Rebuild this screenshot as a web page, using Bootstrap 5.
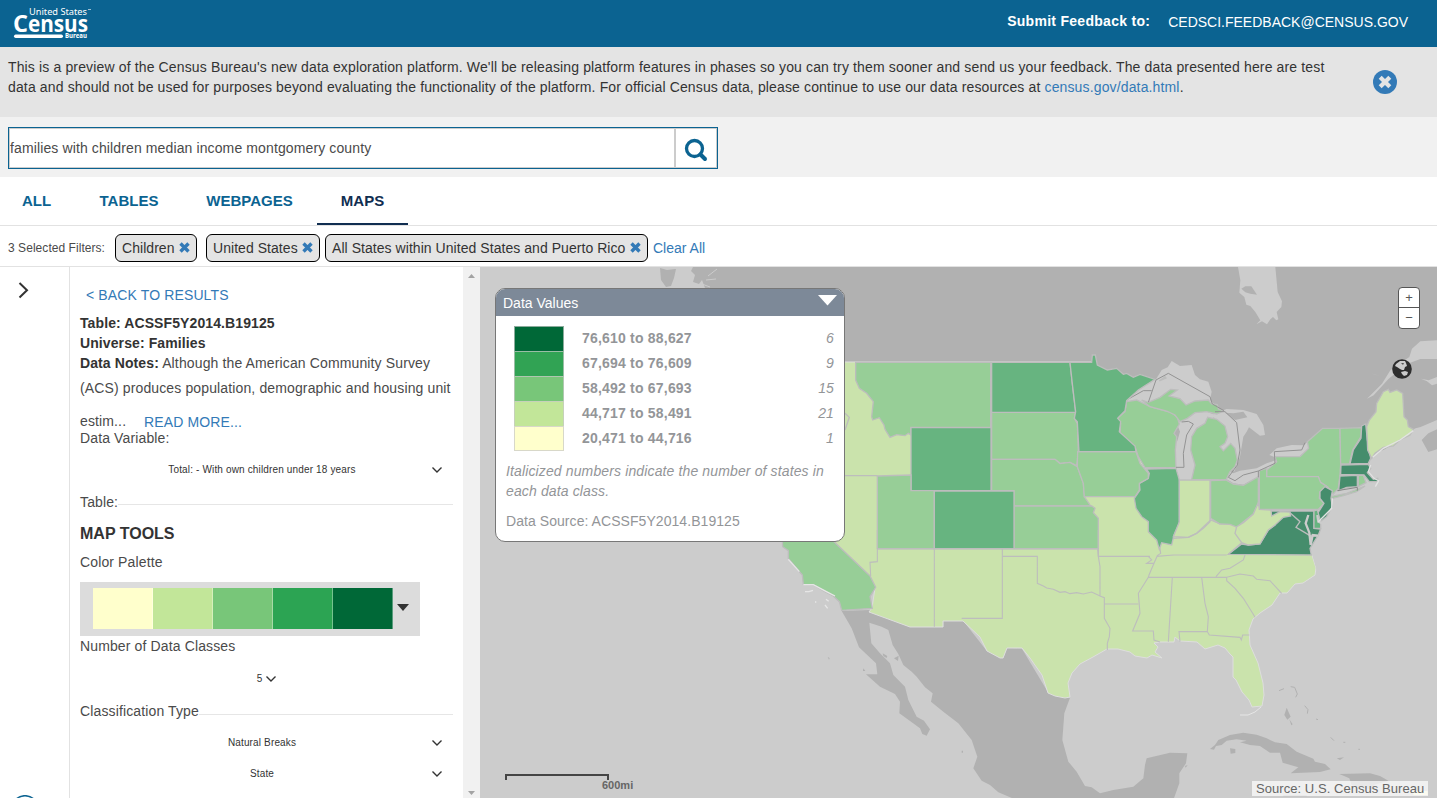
<!DOCTYPE html>
<html lang="en">
<head>
<meta charset="utf-8">
<meta name="viewport" content="width=device-width, initial-scale=1">
<title>Census data explorer - Maps</title>
<link href="https://cdn.jsdelivr.net/npm/bootstrap@5.3.0/dist/css/bootstrap.min.css" rel="stylesheet">
<style>
body{font-family:"Liberation Sans",Arial,sans-serif;font-size:14px;line-height:20px;color:#4a4a4a;height:798px;overflow:hidden;background:#fff}
a{color:#337ab7;text-decoration:none}
.topbar{height:47px;background:#0b6391;color:#fff;padding-right:29px}
.topbar a{color:#fff;margin-left:18px;padding-top:1px}
.topbar b{letter-spacing:.28px}
.logo{margin-left:13px;margin-top:6px;overflow:visible}
.notice{height:70px;background:#e4e4e4;color:#333;padding:10px 40px 0 8px}
.notice p{letter-spacing:.142px;white-space:nowrap}
.notice svg{margin-top:13px}
.searchbar{height:60px;background:#f1f1f1;padding:10px 8px}
.searchbox{width:710px;height:42px;border:1px solid #0b6391;background:#fff}
.searchbox .inner{border:1px solid #ccc;width:100%}
.searchbox input{border:0;outline:0;padding:0;color:#4a4a4a;letter-spacing:.12px;height:38px;background:transparent}
.searchbox button{width:42px;border:0;border-left:2px solid #ccc;background:#fff;padding:4px 0 0}
.tabs{height:49px;border-bottom:1px solid #e2e2e2}
.tabs a{color:#0b6391;font-weight:700;font-size:15px;height:48px;line-height:47px;text-align:center}
.tabs a.active{color:#112e51;border-bottom:2px solid #112e51}
.filters{height:41px;border-bottom:1px solid #e2e2e2;padding:3px 8px 0}
.filters .cap{font-size:12px;letter-spacing:.05px;width:107px}
.chip{height:28px;border:1px solid #000;border-radius:6px;background:#e4e4e4;color:#333;padding:0 6px;letter-spacing:.05px;white-space:nowrap}
.stage{height:531px}
.rail{width:70px;border-right:1px solid #e2e2e2}
.side{width:393px;padding:18px 10px 0;overflow:hidden}
.ln{height:20px;white-space:nowrap;letter-spacing:.13px}
.ln b{color:#333;letter-spacing:.1px}
.rule{height:1px;background:#e6e6e6;flex:1}
.pick{height:30px;font-size:10px;letter-spacing:.15px;color:#333}
.pick span{width:364px;text-align:center}
.pal{width:340px;height:54px;background:#dcdcdc;padding:0 11px 2px 13px}
.pal .sw{width:60px;height:41px;border-right:1px solid rgba(255,255,255,.35)}
.sbar{width:17px;background:#f1f1f1;padding:7px 0 3px}
.mapwrap{position:relative;width:957px;background:#ccc;overflow:hidden}
.legend{position:absolute;left:15px;top:21px;width:350px;height:254px;border:1px solid #777;border-radius:10px;background:#fff;color:#939598;overflow:hidden}
.legend .head{height:27px;background:#7d8998;color:#fff;padding:1px 7px 0 7px}
.legend .cls{height:25px;padding:0 10px 0 18px}
.legend .cls i{letter-spacing:.1px;padding-bottom:2px}
.legend .cls b{letter-spacing:.2px;margin-left:18px;padding-bottom:2px}
.legend .box{width:50px;height:25px;border:1px solid rgba(200,200,200,.7);border-bottom-width:0}
.legend .cls:last-child .box{border-bottom-width:1px}
.legend p{padding:0 10px;letter-spacing:.13px}
.zoomer{position:absolute;left:918px;top:20px;width:22px;height:42px;border:1px solid #555;border-radius:4px;background:#fff;color:#555;font-size:13px}
.zoomer div{height:20px;line-height:20px;text-align:center}
.scale{position:absolute;left:25px;top:507px;width:104px;height:6px;border:2px solid #444;border-bottom:0}
.scaletxt{position:absolute;left:122px;top:508px;font-size:11px;font-weight:700;color:#666}
.globe{position:absolute;left:912px;top:92px}
.src{position:absolute;left:772px;top:514px;width:176px;height:15px;line-height:15px;background:rgba(255,255,255,.7);color:#666;padding-left:4px;font-size:13px;letter-spacing:.05px;white-space:nowrap}
.st path,.bd path{vector-effect:non-scaling-stroke}
.c1{fill:#cae3ac}.c2{fill:#97ce97}.c3{fill:#67b480}.c4{fill:#458d6c}
.st{stroke:#bdbdbd;stroke-width:1.3}
.bd{fill:none;stroke:#bdbdbd;stroke-width:1.1}
.intl{fill:none;stroke:#939393;stroke-width:3}
</style>
</head>
<body>
<header class="topbar d-flex align-items-start justify-content-between">
  <svg class="logo" width="80" height="35" viewBox="0 0 80 35" fill="#fff" font-family="Open Sans, sans-serif">
    <text x="16" y="9" font-size="8.500" font-family="Noto Sans" textLength="58" lengthAdjust="spacingAndGlyphs">United States</text>
    <text x="0" y="25.500" font-size="24" font-weight="700" textLength="15" lengthAdjust="spacingAndGlyphs">C</text>
    <text x="15" y="25.500" font-size="22.500" font-weight="700" textLength="60" lengthAdjust="spacingAndGlyphs">ensus</text>
    <rect x="1" y="28.5" width="49" height="3.5" rx="1.7"/>
    <text x="52" y="32" font-size="6.5" font-weight="700" textLength="22" lengthAdjust="spacingAndGlyphs">Bureau</text>
    <path d="M75 3h3v1h-3z" opacity=".6"/>
  </svg>
  <div class="d-flex" style="padding-top:11px"><b>Submit Feedback to:</b><a href="#">CEDSCI.FEEDBACK@CENSUS.GOV</a></div>
</header>
<section class="notice d-flex justify-content-between">
  <p class="m-0">This is a preview of the Census Bureau's new data exploration platform. We'll be releasing platform features in phases so you can try them sooner and send us your feedback. The data presented here are test<br>data and should not be used for purposes beyond evaluating the functionality of the platform. For official Census data, please continue to use our data resources at <a href="#">census.gov/data.html</a>.</p>
  <svg width="24" height="24" viewBox="0 0 24 24"><circle cx="12" cy="12" r="12" fill="#337ab7"/><path d="M7.2 7.2l9.6 9.6M16.8 7.2l-9.6 9.6" stroke="#e4e4e4" stroke-width="4.2"/></svg>
</section>
<section class="searchbar">
  <div class="searchbox d-flex"><div class="inner d-flex">
    <input class="flex-grow-1" type="text" aria-label="Search" value="families with children median income montgomery county">
    <button aria-label="Go"><svg width="24" height="24" viewBox="0 0 24 24" fill="none" stroke="#0b6391"><circle cx="10.5" cy="10.5" r="8" stroke-width="3.3"/><path d="M16.5 16.5l4.500 4.500" stroke-width="4" stroke-linecap="round"/></svg></button>
  </div></div>
</section>
<nav class="tabs d-flex">
  <a href="#" style="width:73px">ALL</a><a href="#" style="width:112px">TABLES</a><a href="#" style="width:129px">WEBPAGES</a><a href="#" class="active" style="width:91px;margin-left:3px">MAPS</a>
</nav>
<section class="filters d-flex align-items-center">
  <span class="cap">3 Selected Filters:</span>
  <span class="chip d-flex align-items-center justify-content-between" style="width:82px;margin-right:9px">Children <svg width="11" height="11" viewBox="0 0 11 11"><path d="M1.5 1.5l8 8M9.5 1.5l-8 8" stroke="#337ab7" stroke-width="3.4"/></svg></span>
  <span class="chip d-flex align-items-center justify-content-between" style="width:114px;margin-right:5px">United States <svg width="11" height="11" viewBox="0 0 11 11"><path d="M1.5 1.5l8 8M9.5 1.5l-8 8" stroke="#337ab7" stroke-width="3.4"/></svg></span>
  <span class="chip d-flex align-items-center justify-content-between" style="width:323px;margin-right:5px">All States within United States and Puerto Rico <svg width="11" height="11" viewBox="0 0 11 11"><path d="M1.5 1.5l8 8M9.5 1.5l-8 8" stroke="#337ab7" stroke-width="3.4"/></svg></span>
  <a href="#">Clear All</a>
</section>
<main class="stage d-flex">
  <div class="rail d-flex flex-column justify-content-between overflow-hidden">
    <svg width="40" height="40" viewBox="0 0 40 40" fill="none" stroke="#333" stroke-width="2"><path d="M19.5 16l7.5 7.2-7.5 7.3"/></svg>
    <svg width="50" height="3" viewBox="0 0 50 3" fill="none" stroke="#0b6391" stroke-width="1.5"><circle cx="25" cy="14" r="13.3"/></svg>
  </div>
  <div class="side">
    <div class="ln ps-1"><a href="#" style="padding-left:2px">&lt; BACK TO RESULTS</a></div>
    <div class="ln mt-2"><b>Table: ACSSF5Y2014.B19125</b></div>
    <div class="ln"><b>Universe: Families</b></div>
    <div class="ln"><b>Data Notes:</b> Although the American Community Survey</div>
    <div class="ln" style="margin-top:5px">(ACS) produces population, demographic and housing unit</div>
    <div class="ln d-flex" style="margin-top:15px;height:15px;line-height:17px"><span style="width:64px">estim...</span><a href="#" class="pt-0" style="line-height:19px">READ MORE...</a></div>
    <div class="ln" style="height:18px;line-height:20px">Data Variable:</div>
    <div class="pick d-flex align-items-center" style="margin-top:9px"><span style="margin-right:-13px">Total: - With own children under 18 years</span><svg width="12" height="8" viewBox="0 0 12 8" fill="none" stroke="#333" stroke-width="1.4"><path d="M1.5 1.5L6 6l4.500-4.500"/></svg></div>
    <div class="ln d-flex align-items-center" style="margin-top:7px">Table:<div class="rule mt-1"></div></div>
    <div class="ln" style="margin-top:12px;font-size:16px"><b style="letter-spacing:0">MAP TOOLS</b></div>
    <div class="ln" style="margin-top:8px">Color Palette</div>
    <div class="pal d-flex align-items-center" style="margin-top:10px">
      <div class="sw" style="background:#ffffcc"></div><div class="sw" style="background:#c2e699"></div><div class="sw" style="background:#78c679"></div><div class="sw" style="background:#2ca453"></div><div class="sw" style="background:#006837"></div>
      <svg class="ms-1" width="12" height="7" viewBox="0 0 12 7" style="margin-top:-2px"><path d="M0 0h12L6 7z" fill="#333"/></svg>
    </div>
    <div class="ln">Number of Data Classes</div>
    <div class="pick d-flex align-items-center justify-content-center" style="margin-top:8px;margin-bottom:-1px;padding-left:1px">5<svg style="margin-left:3px" width="12" height="8" viewBox="0 0 12 8" fill="none" stroke="#333" stroke-width="1.400"><path d="M1.5 1.500L6 6l4.500-4.500"/></svg></div>
    <div class="ln d-flex align-items-center" style="margin-top:8px">Classification Type<div class="rule" style="margin-top:6px"></div></div>
    <div class="pick d-flex align-items-center" style="margin-top:7px"><span style="margin-right:-13px">Natural Breaks</span><svg width="12" height="8" viewBox="0 0 12 8" fill="none" stroke="#333" stroke-width="1.4"><path d="M1.5 1.5L6 6l4.500-4.500"/></svg></div>
    <div class="pick d-flex align-items-center" style="margin-top:1px"><span style="margin-right:-13px">State</span><svg width="12" height="8" viewBox="0 0 12 8" fill="none" stroke="#333" stroke-width="1.4"><path d="M1.5 1.5L6 6l4.500-4.500"/></svg></div>
  </div>
  <div class="sbar d-flex flex-column justify-content-between align-items-center">
    <svg width="7" height="4" viewBox="0 0 7 4"><path d="M0 4h7L3.500 0z" fill="#a3a3a3"/></svg>
    <svg width="7" height="4" viewBox="0 0 7 4"><path d="M0 0h7L3.500 4z" fill="#a3a3a3"/></svg>
  </div>
  <div class="mapwrap">
    <svg class="d-block" width="957" height="531" viewBox="480 267 957 531">
      <g fill="#b1b1b1">
        <!-- Canada and the islands off British Columbia -->
        <path d="M693 267L691 271L695 275L693 282L699 284L702 280L705 288L845 364H1095L1240 500L1330 470L1410 440L1437 418V267Z"/>
        <path d="M660 268l7 2 8-1 1 0-2 9-3 8-5 1-5-7z"/>
        <path d="M708 276l9-7M706 280l10-1M702 284l8 3" stroke="#ccc" stroke-width="1" fill="none"/>
      </g>
      <g transform="translate(1037 262) scale(.33333)">
        <path fill="#ccc" d="M603 15L715 15L722 90L735 118L733 135L719 150L724 172L718 175L708 165L700 172L690 187L675 178L658 187L670 175L655 150L640 132L628 128L622 105L607 92L610 55Z"/>
        <path fill="#b1b1b1" d="M613 80L625 73L643 73L660 98L640 95L625 91Z"/>
        <path fill="#ccc" d="M1200 235L1150 238L1125 260L1117 285L1095 300L1060 325L1035 365L990 410L1010 400L1055 350L1110 306L1150 291L1200 291Z"/>
        <path fill="#ccc" d="M1152 350L1175 355L1200 345V365L1185 370L1170 358ZM1000 333L1028 342L1015 338Z"/>
      </g>
      <g fill="#b1b1b1" transform="translate(770 530) scale(.33333)">
        <!-- Mexico with Baja California and Yucatan -->
        <path d="M215 243L298 240L420 291L520 291L520 273L580 273L650 362L700 385L710 353L755 355L835 488L900 503L883 550L877 630L895 695L920 725L945 768L965 772L990 790L1030 780L1090 770L1120 745L1125 705L1130 685L1200 668L1252 670L1248 700L1228 730L1228 760L1210 810L740 810L685 787L660 765L635 752L610 715L622 680L605 630L565 580L520 545L483 515L488 490L465 472L440 440L425 425L400 405L385 372L368 345L355 300L335 290L298 278L304 340L330 370L360 400L370 435L405 470L415 510L440 560L462 572L480 598L470 617L457 612L450 595L388 550L390 515L375 492L330 470L288 433L322 433L318 400L267 352L245 295Z"/>
        <path d="M338 370l14 8-2 6-10-6zM372 385l14-8-2 16zM173 380l6 5-2 4zM280 415l6 8h-7zM575 662h4v6h-4z"/>
      </g>
      <g fill="#b1b1b1" transform="translate(1080 530) scale(.33333)">
        <!-- Cuba, Hispaniola and the Bahamas -->
        <path d="M390 657L405 645L415 630L450 615L490 608L530 614L560 625L585 637L620 642L650 665L700 686L705 695L735 702L752 718L720 726L632 730L655 712L608 698L600 668L570 668L540 648L510 645L480 637L500 632L470 628L440 632L425 645L408 648L402 659Z"/>
        <path d="M450 655l16 2v12l-14 2zM778 732L870 730L900 738L925 752L880 765L895 780L850 775L815 765L808 745ZM620 533l12 27-10 9-9-14zM628 568l10 15-4 3zM315 708l8-3-6 8zM770 685l22-3-12 8z"/>
        <path d="M597 482l15-6M632 470l12 2 8 20-5 10M674 527l10 12-2 12M708 567l6 2M752 622l10 10M790 637h6M835 658h5M610 797h70" fill="none" stroke="#b1b1b1" stroke-width="3"/>
        <path d="M995 783h48v12h-42z" fill="#f4f4cf"/>
      </g>
      <!-- United States, lowest visible class as the base -->
      <path class="c1" stroke="#dedede" d="M833 362H1092L1150 480H1211V520H1236L1258 510L1300 520L1312 555L1316 568L1315 575L1303 583L1295 584L1287 593L1280 593L1272 605L1260 613L1253 619L1249 630L1250 645L1258 663L1263 683L1264 695L1262 706L1252 707L1249 700L1242 692L1236 680L1233 677L1233 657L1230 654L1225 648L1218 645L1205 649L1197 642L1180 641L1175 637L1174 642L1160 642L1154 643L1158 647L1155 652L1162 658L1152 655L1147 658L1135 656L1130 652L1118 649L1107 649L1093 657L1080 664L1072 673L1068 683L1070 697L1065 698L1055 696L1048 693L1042 675L1037 668L1030 658L1022 648L1007 648L1003 658L1000 658L987 651L980 637L963 621H943V627H910L869 612L872 608L875 588L870 576L833 542Z"/>
      <path d="M1240 715l8 0 7-3 6-5" fill="none" stroke="#e6e6e6"/>
      <g transform="translate(1100 340) scale(.33333)">
        <g fill="#ccc">
          <path d="M80 182L95 165L115 145L140 128L168 118L185 90L203 82L215 63L240 78L275 75L285 105L300 118L325 125L335 155L330 180L355 205L335 200L250 200L120 190Z"/>
          <path d="M235 262L222 275L232 245L262 218L310 210L345 225L325 262L300 265L275 290L275 330L287 375L272 418L238 420L225 385L230 310L240 275Z"/>
          <path d="M340 222L380 207L430 210L470 222L490 255L495 285L480 287L447 262L440 275L430 290L420 350L412 375L402 395L370 340L360 315Z"/>
          <path d="M380 418L390 395L400 400L420 392L470 385L500 370L528 360L532 368L520 380L490 395L475 410L430 434L400 430Z"/>
          <path d="M508 345L530 325L575 315L612 316L622 305L628 325L600 348L525 352Z"/>
          <path d="M940 268L1011 238V280L975 290L960 315L985 340L1011 330V690H650L630 620L640 540L700 470L810 360Z"/>
        </g>
        <path fill="#b1b1b1" d="M375 218L400 220L430 215L442 232L405 240ZM965 300L985 280L1011 268V328L985 336Z"/>
        <path fill="#b1b1b1" d="M940 265L1011 225V240L960 262Z"/>
        <g class="st">
          <path class="c2" d="M80 185L110 180L150 200L215 218L232 232L238 252L222 280L230 290L226 330L228 383L135 383L115 350L105 320L60 280L62 250L52 235L75 215Z"/>
          <path class="c2" d="M125 180L145 187L180 172L212 148L232 150L207 168L240 176L258 195L285 183L325 180L335 192L352 194L355 207L370 213L350 222L320 215L285 218L262 235L240 245L225 225L200 213L150 200ZM178 123L195 110L198 114Z"/>
          <path class="c2" d="M275 418L285 375L272 330L275 290L290 265L315 250L323 232L350 238L375 258L383 290L375 310L360 320L370 332L392 310L405 325L412 360L405 380L390 395L378 420Z"/>
          <path class="c3" d="M140 387L228 385L238 420L238 550L222 585L215 615L185 608L178 628L170 600L145 575L145 545L125 530L108 505L103 475L120 450L118 430L145 415L148 400Z"/>
          <path class="c1" d="M238 420L330 420L330 545L310 565L290 580L265 592L220 590L232 560L238 545Z"/>
          <path class="c2" d="M332 422L378 420L400 432L430 436L475 410L475 490L460 522L430 545L412 562L390 553L360 552L332 535Z"/>
          <path class="c2" d="M668 265L720 265L722 372L720 405L715 445L700 462L682 440L660 425L655 410L500 410L500 390L530 365L525 350L600 350L626 325L622 305L645 285Z"/>
          <path class="c2" d="M690 470L740 460L795 438L770 455L730 467L698 475ZM720 265L785 263L783 290L758 330L748 372L722 372Z"/>
          <path class="c4" d="M785 258L797 252L802 300L812 355L805 370L750 372L760 330L783 295Z"/>
          <path class="c1" d="M865 148L870 157L890 150L908 160L912 230L922 240L925 260L940 268L930 285L900 300L880 318L850 322L825 340L815 355L803 330L800 260L808 240L828 215L830 190L850 155Z"/>
          <path class="c4" d="M723 375L805 373L812 385L802 398L820 418L833 415L835 424L808 425L792 405L722 403Z"/>
          <path class="c4" d="M720 408L772 406V440L740 442L716 452Z"/><path class="c2" d="M775 406L790 406L798 428L775 440Z"/>
          <path class="c2" d="M478 392L500 385L500 410L655 410L662 428L682 440L660 455L658 475L672 490L655 508L478 508Z"/>
          <path class="c4" d="M675 440L697 452L693 475L697 500L680 530L660 545L650 525L672 490L660 475L660 455Z"/>
          <path class="c4" d="M512 513L642 513L642 565L662 567L655 585L630 625L634 645L385 643L425 612L445 615L480 612L505 570L525 555L515 530Z"/>
          <path class="c3" d="M642 513L652 510L662 545L662 565L642 565Z"/>
          <path class="c1" d="M475 488L478 508L513 510L515 528L540 515L570 516L572 528L550 532L525 555L505 570L480 612L445 615L425 608L405 580L410 560L430 548L460 522Z"/>
          <path fill="none" d="M570 518L600 545L588 562L615 578L632 588H655M220 595L265 592L290 580L332 540L360 552M425 608L385 643"/>
        </g>
        <path d="M625 525L617 550L628 578L632 615L638 585L655 587M652 525L655 545L668 550" fill="none" stroke="#ccc" stroke-width="7"/>
        <path d="M712 452L772 442V452" stroke="#888" stroke-width="3" fill="none"/>
        <path d="M818 352L850 325L900 300L940 272M812 375L805 395L822 415L836 422L826 440M655 545L695 505L697 475" stroke="#e2e2e2" stroke-width="4" fill="none"/>
        <path class="intl" d="M80 180L130 152H155M145 187L168 120L205 100L330 170L337 192L372 212M345 215H375L410 248L420 330L412 375L385 412L405 422L430 405L475 393L525 370L523 335L605 330L615 308M228 382H252L250 340L260 285L280 252L265 244L245 246M475 393V412"/>
      </g>
      <g class="st" transform="translate(840 340) scale(.33333)">
        <path class="c2" d="M47 67H452V262H213V285L205 280L195 287L170 284L150 292L135 268L132 255L118 233L98 240L95 230L100 185L80 160L58 145L47 120Z"/>
        <path class="c3" d="M213 263H453V452H213Z"/>
        <path class="c2" d="M112 408L213 405V452H283V626H112Z"/>
        <path class="c2" d="M455 217H707L703 235L712 250L715 335L710 377L690 367L660 370L645 358H455Z"/>
        <path class="c2" d="M455 358H645L660 371L690 367L712 380L730 430L733 470L752 498H522V452H455Z"/>
        <path class="c2" d="M522 498H755L765 505L760 518L775 535V626H522Z"/>
        <path class="c3" d="M283 453H522V626H283ZM455 67H690L698 140L707 217H455Z"/>
        <path class="c2" d="M713 335H888L900 370L925 400L925 415L898 430L898 450L885 470H733L730 430L712 380Z"/>
        <path class="c3" d="M690 67H755L757 45L766 45L772 75L802 90L830 85L850 103L860 100L880 112L900 103L945 118L895 150L860 182L855 212L833 235L842 245L838 275L885 318L888 335H717L712 245L703 235L707 215L698 140Z"/>
        <path fill="none" d="M15 407L112 407M15 220L28 232L15 270"/>
      </g>
      <g transform="translate(770 530) scale(.33333)">
        <g class="st"><path class="c2" d="M35 0L155 0L300 138L317 172L300 200L307 235L215 241L208 215L190 198L165 185L130 164L100 163L97 135L55 85L55 62L38 50Z"/></g>
        <path d="M55 88L88 125M100 164H130L168 184L195 198M105 185h12l12-4M168 208l8 6M165 225l8 10M135 216h4" fill="none" stroke="#e6e6e6" stroke-width="4"/>
        <g class="bd"><path d="M322 0V95L300 97L302 138M322 57H985M493 57V290M697 57V265H575M697 79H802V160L820 168L830 174L850 178L870 187L885 185L900 191L920 188L940 192L965 186L990 198L1003 203V265L1020 295L1018 320L1012 340V360M985 57L985 79L990 110V198M1003 222H1105M985 79H1140"/></g>
      </g>
      <g class="bd" transform="translate(1080 530) scale(.33333)">
        <path d="M55 0V79M205 79L215 90L200 100H222M240 55L242 70L232 77L222 100L207 135L205 142L175 190L180 250L158 303H220L222 330L240 336M230 79L280 75H440M205 142H440M495 75L490 90L450 115L425 120L408 140M277 142L265 335M365 142L375 220L385 260L382 305L388 315L480 322L484 330L488 315H508M382 305H297L300 335M440 142L440 152L465 175L490 205L518 250L525 262M440 142L480 132L520 138L530 148L570 152L605 190M53 58L55 79"/>
      </g>
    </svg>
    <div class="legend">
      <div class="head d-flex justify-content-between" style="line-height:26px">Data Values<svg width="19" height="11" viewBox="0 0 19 11" style="margin-top:5px"><path d="M0 0h19L9.500 10.500z" fill="#fff"/></svg></div>
      <div style="padding-top:10px">
        <div class="cls d-flex align-items-center"><span class="box" style="background:#006837"></span><b>76,610 to 88,627</b><i class="ms-auto">6</i></div>
        <div class="cls d-flex align-items-center"><span class="box" style="background:#31a354"></span><b>67,694 to 76,609</b><i class="ms-auto">9</i></div>
        <div class="cls d-flex align-items-center"><span class="box" style="background:#78c679"></span><b>58,492 to 67,693</b><i class="ms-auto">15</i></div>
        <div class="cls d-flex align-items-center"><span class="box" style="background:#c2e699"></span><b>44,717 to 58,491</b><i class="ms-auto">21</i></div>
        <div class="cls d-flex align-items-center"><span class="box" style="background:#ffffcc"></span><b>20,471 to 44,716</b><i class="ms-auto">1</i></div>
      </div>
      <p class="fst-italic" style="margin:10px 0">Italicized numbers indicate the number of states in<br>each data class.</p>
      <p class="m-0" style="letter-spacing:.06px">Data Source: ACSSF5Y2014.B19125</p>
    </div>
    <div class="zoomer"><div style="border-bottom:1px solid #555">+</div><div>−</div></div>
    <svg class="globe" width="20" height="20" viewBox="0 0 20 20"><circle cx="10" cy="10" r="9.800" fill="#2e2e2e"/><path d="M4 5l4-3 5 0 1 2 1 3-2 1-1 3-2 0-2-1-3-2-2-1zM9 13l4-1 3 1-1 3-3 1-2-2z" fill="#ccc"/><path d="M9 4l3 0-1 2z" fill="#555"/></svg>
    <div class="scale"></div><div class="scaletxt">600mi</div>
    <div class="src">Source: U.S. Census Bureau</div>
  </div>
</main>
<script src="https://cdn.jsdelivr.net/npm/bootstrap@5.3.0/dist/js/bootstrap.bundle.min.js"></script>
</body>
</html>
